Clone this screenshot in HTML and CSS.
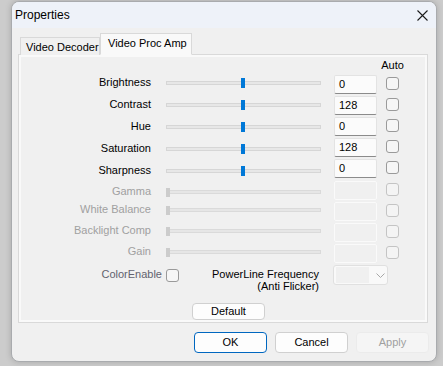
FILE: index.html
```html
<!DOCTYPE html>
<html>
<head>
<meta charset="utf-8">
<link rel="stylesheet" href="styles.css">
</head>
<body>
<div class="window">
  <div class="titlebar">
    <span class="title">Properties</span>
    <svg class="close" width="11" height="11" viewBox="0 0 11 11"><path d="M0.5 0.5 L10.5 10.5 M10.5 0.5 L0.5 10.5" stroke="#1b1b1b" stroke-width="1.1" fill="none"/></svg>
  </div>
  <div class="tabs">
    <div class="tab">Video Decoder</div>
    <div class="tab active">Video Proc Amp</div>
  </div>
  <div class="panel">
    <div class="page">
      <div class="auto-head"><span class="auto">Auto</span></div>
      <div class="controls">
        <div class="left-col">
          <div class="lrow r22">
            <div class="label">Brightness</div>
            <div class="slider"><div class="track"></div><div class="thumb"></div></div>
          </div>
          <div class="lrow r22">
            <div class="label">Contrast</div>
            <div class="slider"><div class="track"></div><div class="thumb"></div></div>
          </div>
          <div class="lrow r22">
            <div class="label">Hue</div>
            <div class="slider"><div class="track"></div><div class="thumb"></div></div>
          </div>
          <div class="lrow r22">
            <div class="label">Saturation</div>
            <div class="slider"><div class="track"></div><div class="thumb"></div></div>
          </div>
          <div class="lrow r21">
            <div class="label">Sharpness</div>
            <div class="slider"><div class="track"></div><div class="thumb"></div></div>
          </div>
          <div class="lrow r18 disabled">
            <div class="label">Gamma</div>
            <div class="slider"><div class="track"></div><div class="thumb"></div></div>
          </div>
          <div class="lrow r21 disabled">
            <div class="label">White Balance</div>
            <div class="slider"><div class="track"></div><div class="thumb"></div></div>
          </div>
          <div class="lrow r21 disabled">
            <div class="label">Backlight Comp</div>
            <div class="slider"><div class="track"></div><div class="thumb"></div></div>
          </div>
          <div class="lrow r21 disabled">
            <div class="label">Gain</div>
            <div class="slider"><div class="track"></div><div class="thumb"></div></div>
          </div>
        </div>
        <div class="right-col">
          <div class="rrow"><div class="edit">0</div><div class="check"></div></div>
          <div class="rrow"><div class="edit">128</div><div class="check"></div></div>
          <div class="rrow"><div class="edit">0</div><div class="check"></div></div>
          <div class="rrow"><div class="edit">128</div><div class="check"></div></div>
          <div class="rrow r22"><div class="edit">0</div><div class="check"></div></div>
          <div class="rrow disabled"><div class="edit"></div><div class="check"></div></div>
          <div class="rrow disabled"><div class="edit"></div><div class="check"></div></div>
          <div class="rrow disabled"><div class="edit"></div><div class="check"></div></div>
          <div class="rrow disabled"><div class="edit"></div><div class="check"></div></div>
        </div>
      </div>
      <div class="extra">
        <div class="ce-label">ColorEnable</div>
        <div class="check ce-check"></div>
        <div class="pl-label">PowerLine Frequency<br>(Anti Flicker)</div>
        <div class="combo">
          <div class="combo-field"></div>
          <svg class="chev" width="9" height="5" viewBox="0 0 9 5"><path d="M0.5 0.5 L4.5 4.5 L8.5 0.5" stroke="#a8a8a8" stroke-width="1" fill="none"/></svg>
        </div>
      </div>
      <div class="default-row"><div class="btn default">Default</div></div>
    </div>
  </div>
  <div class="buttons">
    <div class="btn ok">OK</div>
    <div class="btn">Cancel</div>
    <div class="btn apply">Apply</div>
  </div>
</div>
</body>
</html>
```
FILE: styles.css
```css
html, body {
  margin: 0;
  padding: 0;
}
body {
  background: #cccccc;
  height: 366px;
  overflow: hidden;
  font-family: "Liberation Sans", Arial, sans-serif;
  font-size: 11px;
  color: #000;
}
.window {
  margin: 1px 0 0 11px;
  width: 426px;
  height: 361px;
  box-sizing: border-box;
  border: 1px solid #a9abae;
  border-radius: 8px;
  background: #f0f0f0;
  overflow: hidden;
  box-shadow: 0 0 6px rgba(0,0,0,0.18);
}
.titlebar {
  height: 26px;
  background: #eef2f9;
  display: flex;
  align-items: center;
  justify-content: space-between;
  padding: 0 8px 0 3px;
}
.title {
  font-size: 12px;
}
.close {
  display: block;
  margin-top: 1px;
}
.tabs {
  height: 27px;
  display: flex;
  align-items: flex-end;
  padding-left: 8px;
  position: relative;
  z-index: 1;
  margin-bottom: -1px;
}
.tab {
  height: 18px;
  box-sizing: border-box;
  border: 1px solid #d9d9d9;
  border-bottom: none;
  background: #f0f0f0;
  padding: 3px 0 0 5px;
  width: 80px;
  line-height: 13px;
}
.tab.active {
  height: 22px;
  width: 92px;
  background: #f9f9f9;
  padding: 3px 0 0 7px;
  border-bottom: 1px solid #f9f9f9;
}
.panel {
  margin-left: 6px;
  width: 410px;
  height: 269px;
  box-sizing: border-box;
  border: 1px solid #d9d9d9;
  padding: 2px;
  background: #f9f9f9;
}
.page {
  background: #f0f0f0;
  height: 100%;
}
.auto-head {
  height: 18px;
  display: flex;
  padding-left: 355px;
}
.auto {
  width: 33px;
  text-align: center;
  line-height: 13px;
  margin-top: 2px;
}
.controls {
  display: flex;
  align-items: flex-start;
}
.left-col {
  width: 300px;
  padding-top: 1px;
}
.lrow {
  display: flex;
  align-items: flex-start;
}
.r22 { height: 22px; }
.r21 { height: 21px; }
.r18 { height: 18px; }
.label {
  width: 130px;
  text-align: right;
  line-height: 13px;
  white-space: nowrap;
}
.slider {
  margin-left: 15px;
  width: 155px;
  height: 14px;
  position: relative;
}
.track {
  position: absolute;
  left: 0;
  right: 0;
  top: 5px;
  height: 4px;
  box-sizing: border-box;
  border: 1px solid #d6d6d6;
  background: #e7e7e7;
}
.thumb {
  position: absolute;
  left: 75px;
  top: 2px;
  width: 4px;
  height: 10px;
  background: #0078d7;
}
.right-col {
  margin-left: 13px;
}
.rrow {
  display: flex;
  align-items: flex-start;
  height: 21px;
}
.rrow.r22 { height: 22px; }
.edit {
  width: 43px;
  height: 19px;
  box-sizing: border-box;
  border: 1px solid #e3e3e3;
  border-bottom-color: #8b8b8b;
  border-radius: 2px;
  background: #fbfbfb;
  padding: 2px 0 0 4px;
  line-height: 13px;
}
.check {
  margin-left: 9px;
  margin-top: 2px;
  width: 13px;
  height: 13px;
  box-sizing: border-box;
  border: 1px solid #9a9a9a;
  border-radius: 3px;
  background: #f6f6f6;
}
.disabled .label {
  color: #a0a0a0;
}
.disabled .thumb {
  left: 0;
  top: 3px;
  height: 9px;
  background: #cccccc;
}
.disabled .track {
  border-color: #dadada;
  background: #e6e6e6;
}
.disabled .edit {
  border: 1px solid #fafafa;
  background: #f0f0f0;
}
.disabled .check {
  border-color: #c4c4c4;
  background: #f4f4f4;
}
.extra {
  display: flex;
  align-items: flex-start;
  height: 20px;
  margin-top: -1px;
}
.ce-label {
  width: 141px;
  text-align: right;
  color: #62626e;
  line-height: 13px;
  margin-top: 3px;
}
.check.ce-check {
  margin-left: 4px;
  margin-top: 4px;
  border-color: #9a9a9a;
}
.pl-label {
  width: 140px;
  text-align: right;
  line-height: 12px;
  margin-top: 3px;
  white-space: nowrap;
}
.combo {
  margin-left: 14px;
  width: 55px;
  height: 20px;
  box-sizing: border-box;
  border: 1px solid #e0e0e0;
  border-radius: 3px;
  background: #f9f9f9;
  display: flex;
  align-items: center;
  padding: 0 2px;
}
.combo-field {
  width: 33px;
  height: 16px;
  background: #f0f0f0;
}
.chev {
  display: block;
  margin-left: 7px;
}
.default-row {
  margin-top: 18px;
  padding-left: 171px;
  display: flex;
}
.btn {
  width: 73px;
  height: 21px;
  box-sizing: border-box;
  border: 1px solid #d0d0d0;
  border-radius: 4px;
  background: #fdfdfd;
  text-align: center;
  line-height: 19px;
}
.btn.default {
  height: 17px;
  line-height: 15px;
}
.buttons {
  display: flex;
  justify-content: flex-end;
  gap: 8px;
  padding: 9px 7px 0 0;
}
.btn.ok {
  border-color: #0067c0;
}
.btn.apply {
  background: #f5f5f5;
  border-color: #ebebeb;
  color: #a0a0a0;
}
```
